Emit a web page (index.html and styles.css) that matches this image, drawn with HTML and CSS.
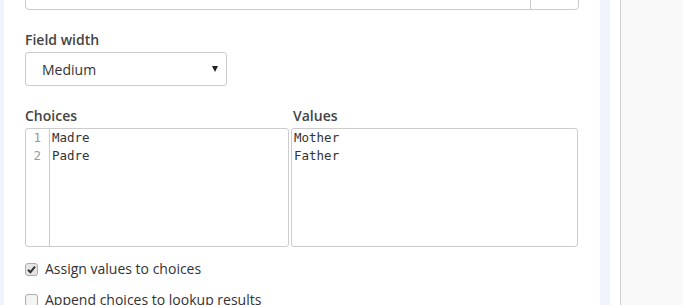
FILE: index.html
```html
<!DOCTYPE html>
<html lang="en">
<head>
    <meta charset="UTF-8">
    <meta name="viewport" content="width=device-width, initial-scale=1.0">
    <title>Field settings</title>
    <link rel="stylesheet" href="styles.css">
</head>
<body>

<div class="page">
    <div class="edge"></div>
    <div class="panel">
        <!-- input group cut off at the top -->
        <div class="input-group">
            <div class="input-main"></div>
            <div class="input-addon"></div>
        </div>

        <div class="form-group">
            <label class="field-label">Field width</label>
            <div class="select">
                <span class="select-text">Medium</span>
                <span class="select-arrow"></span>
            </div>
        </div>

        <div class="choices-row">
            <div class="col">
                <label class="field-label">Choices</label>
                <div class="editor">
                    <div class="gutter">
                        <div>1</div>
                        <div>2</div>
                    </div>
                    <div class="code">
                        <div>Madre</div>
                        <div>Padre</div>
                    </div>
                </div>
            </div>
            <div class="col">
                <label class="field-label values-label">Values</label>
                <div class="editor plain">
                    <div class="code">
                        <div>Mother</div>
                        <div>Father</div>
                    </div>
                </div>
            </div>
        </div>

        <div class="check-row">
            <span class="check checked">
                <svg width="9" height="9" viewBox="0 0 9 9"><path d="M1 4.8 L3.4 7.2 L8 1.6" fill="none" stroke="#333" stroke-width="2"/></svg>
            </span>
            <span>Assign values to choices</span>
        </div>
        <div class="check-row">
            <span class="check"></span>
            <span>Append choices to lookup results</span>
        </div>
    </div>
    <div class="gap"></div>
    <div class="spacer"></div>
    <div class="sidebar"></div>
</div>

</body>
</html>
```

FILE: styles.css
```css
body {
    margin: 0;
    font-family: "Open Sans", "Liberation Sans", sans-serif;
    font-size: 14px;
    color: #333;
    background: #fff;
    overflow: hidden;
}
.page {
    display: flex;
    height: 305px;
    overflow: hidden;
}
.edge {
    width: 4px;
    background: #f0f5fd;
}
.panel {
    width: 554px;
    padding: 0 21px;
    background: #fff;
}
.gap {
    width: 10px;
    background: #f0f5fd;
}
.spacer {
    width: 10px;
    background: #fff;
}
.sidebar {
    flex: 1;
    background: #f9f9f9;
    border-left: 1px solid #ccc;
}
.input-group {
    display: flex;
    height: 34px;
    margin-top: -24px;
    border: 1px solid #ccc;
    border-radius: 4px;
    box-sizing: border-box;
}
.input-main {
    flex: 1;
}
.input-addon {
    width: 47px;
    border-left: 1px solid #ccc;
}
.form-group {
    margin-top: 20px;
}
.field-label {
    display: block;
    font-weight: 600;
    color: #444;
    line-height: 20px;
    margin-bottom: 2px;
}
.select {
    display: flex;
    align-items: center;
    justify-content: space-between;
    width: 202px;
    height: 34px;
    box-sizing: border-box;
    padding: 0 8px 0 16px;
    border: 1px solid #ccc;
    border-radius: 3px;
}
.select-arrow {
    width: 0;
    height: 0;
    border-left: 3px solid transparent;
    border-right: 3px solid transparent;
    border-top: 6px solid #222;
}
.choices-row {
    display: grid;
    grid-template-columns: 264px 287px;
    gap: 2px;
    margin-top: 20px;
}
.values-label {
    padding-left: 2px;
}
.editor {
    display: flex;
    height: 119px;
    box-sizing: border-box;
    border: 1px solid #ccc;
    border-radius: 3px;
    font-family: "DejaVu Sans Mono", "Liberation Mono", monospace;
    font-size: 12.5px;
    line-height: 18px;
}
.gutter {
    width: 24px;
    padding-right: 8px;
    box-sizing: border-box;
    text-align: right;
    color: #999;
    border-right: 1px solid #ccc;
}
.code {
    padding-left: 2px;
    color: #333;
}
.check-row {
    display: flex;
    align-items: center;
    gap: 7px;
    margin-top: 12px;
    line-height: 20px;
}
.check-row + .check-row {
    margin-top: 11px;
}
.check {
    display: flex;
    align-items: center;
    justify-content: center;
    width: 13px;
    height: 13px;
    box-sizing: border-box;
    border: 1px solid #aaa;
    border-radius: 3px;
    background: #f4f4f4;
}
.check.checked {
    background: #e6e6e6;
}
```
